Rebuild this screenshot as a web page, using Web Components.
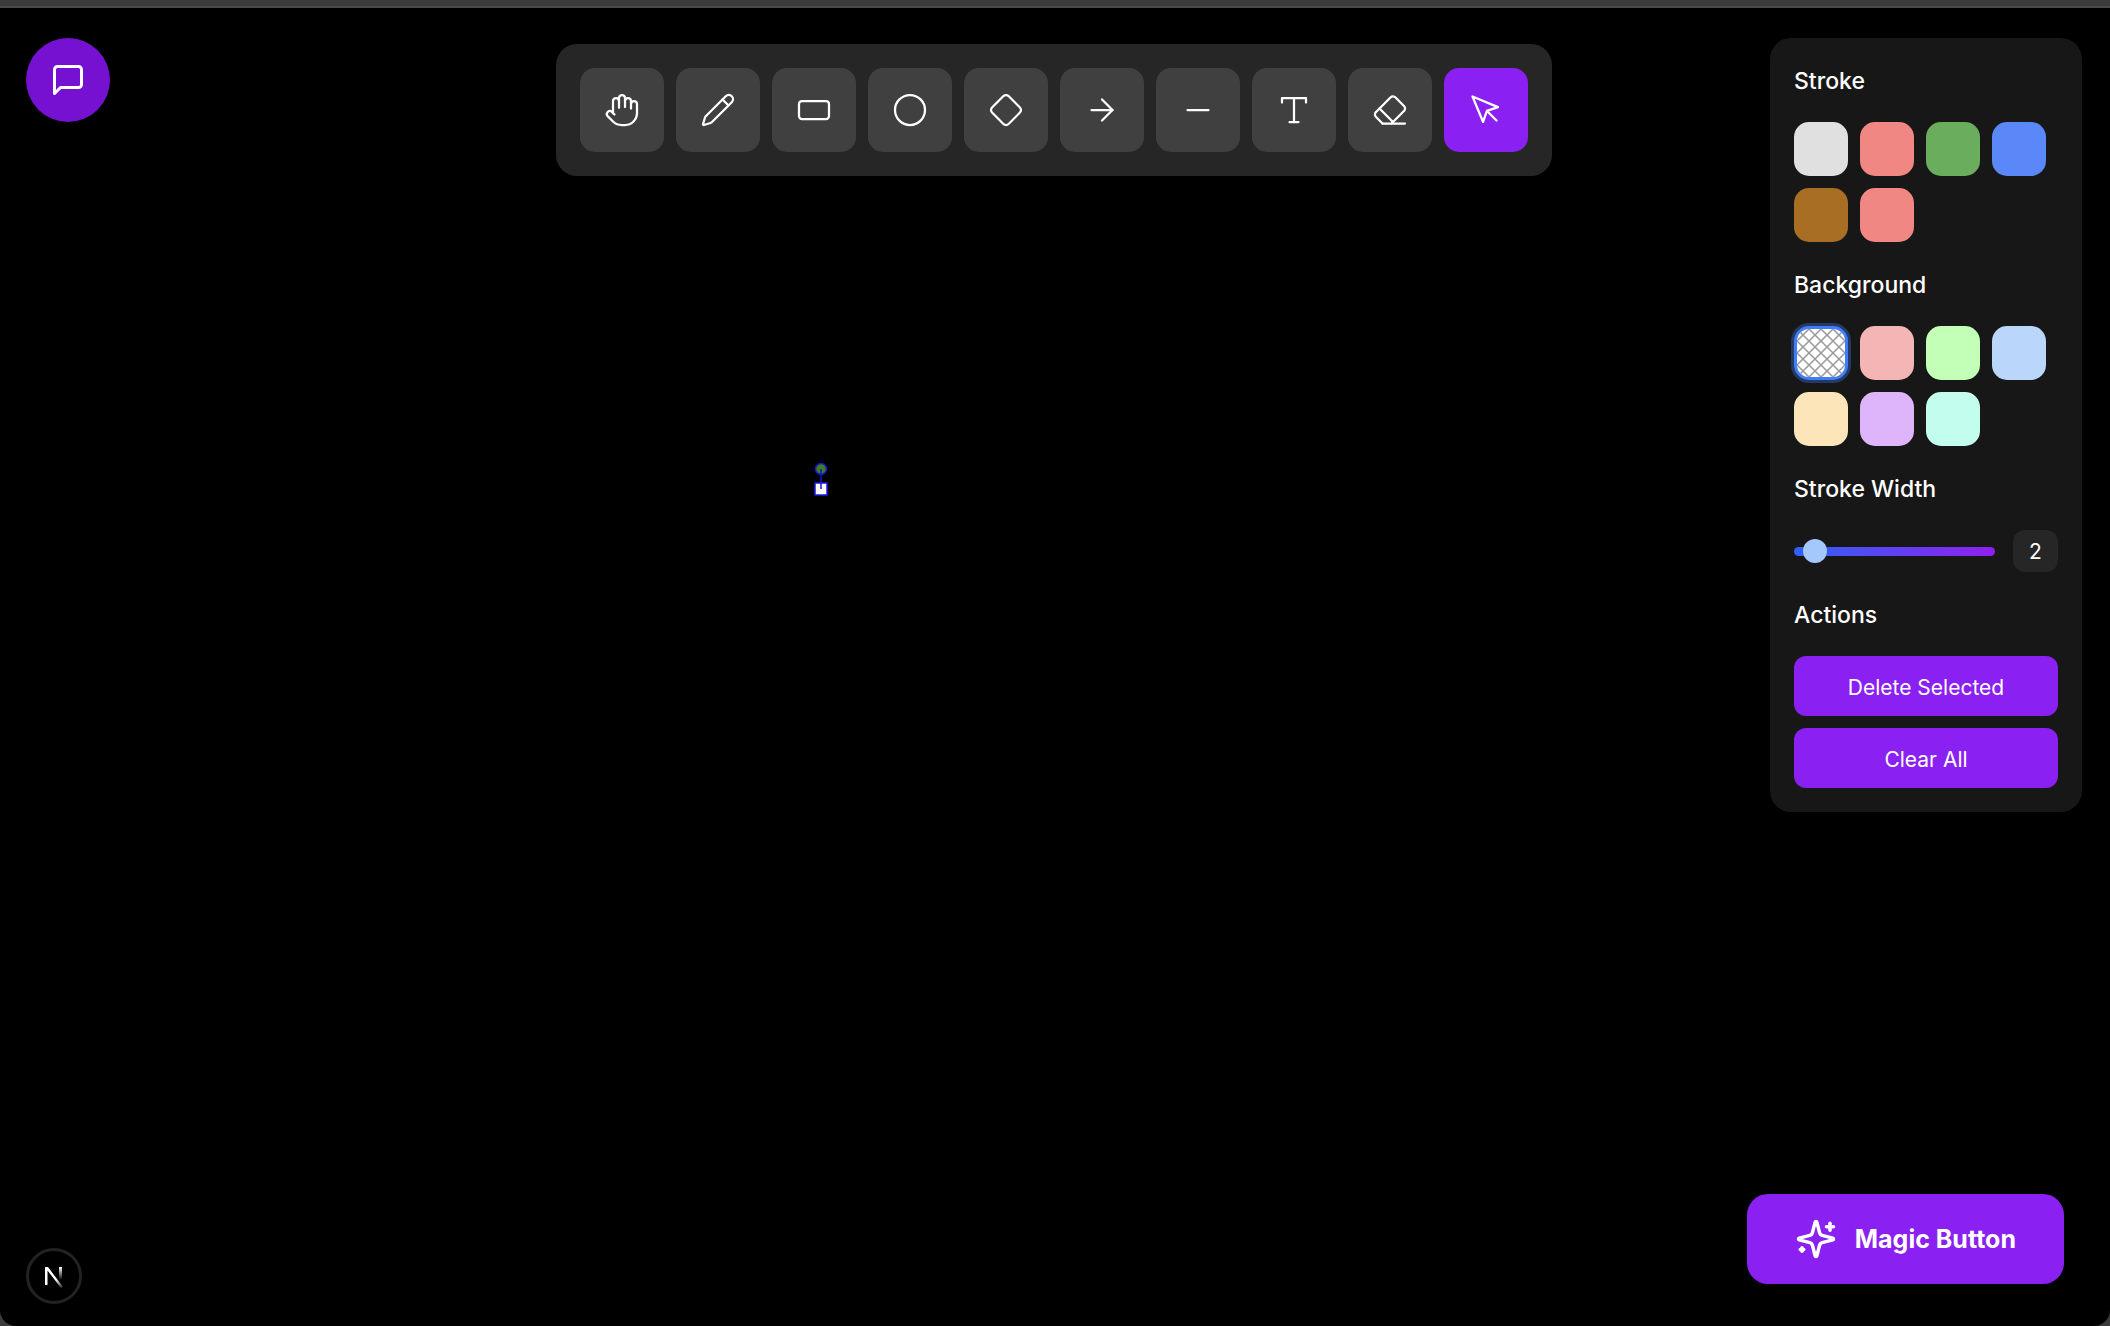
<!DOCTYPE html>
<html lang="en">
<head>
<meta charset="utf-8">
<title>Whiteboard</title>
<style>
html, body { height: 100%; }
body { margin: 0; background: #3c3c3c; color: #fff; font-family: Inter, "Noto Sans", sans-serif; font-size: 21px; }
</style>
</head>
<body>
<board-app></board-app>
<script>
const ICONS = {
  hand: '<path d="M18 11V6a2 2 0 0 0-2-2a2 2 0 0 0-2 2"/><path d="M14 10V4a2 2 0 0 0-2-2a2 2 0 0 0-2 2v2"/><path d="M10 10.5V6a2 2 0 0 0-2-2a2 2 0 0 0-2 2v8"/><path d="M18 8a2 2 0 1 1 4 0v6a8 8 0 0 1-8 8h-2c-2.8 0-4.5-.86-5.99-2.34l-3.6-3.6a2 2 0 0 1 2.83-2.82L7 15"/>',
  pencil: '<path d="M21.174 6.812a1 1 0 0 0-3.986-3.987L3.842 16.174a2 2 0 0 0-.5.83l-1.321 4.352a.5.5 0 0 0 .623.622l4.353-1.32a2 2 0 0 0 .83-.497z"/><path d="m15 5 4 4"/>',
  rectangle: '<rect width="20" height="12" x="2" y="6" rx="2"/>',
  circle: '<circle cx="12" cy="12" r="10"/>',
  diamond: '<path d="M2.7 10.3a2.41 2.41 0 0 0 0 3.41l7.59 7.59a2.41 2.41 0 0 0 3.41 0l7.59-7.59a2.41 2.41 0 0 0 0-3.41l-7.59-7.59a2.41 2.41 0 0 0-3.41 0Z"/>',
  arrow: '<path d="M5 12h14"/><path d="m12 5 7 7-7 7"/>',
  line: '<path d="M5 12h14"/>',
  text: '<path d="M4 7V4h16v3"/><path d="M9 20h6"/><path d="M12 4v16"/>',
  eraser: '<path d="m7 21-4.3-4.3c-1-1-1-2.5 0-3.4l9.6-9.6c1-1 2.5-1 3.4 0l5.6 5.6c1 1 1 2.5 0 3.4L13 21"/><path d="M22 21H7"/><path d="m5 11 9 9"/>',
  pointer: '<path d="m3 3 7.07 16.97 2.51-7.39 7.39-2.51L3 3z"/><path d="m13 13 6 6"/>',
  chat: '<path d="M21 15a2 2 0 0 1-2 2H7l-4 4V5a2 2 0 0 1 2-2h14a2 2 0 0 1 2 2z"/>',
  sparkles: '<path d="M9.937 15.5A2 2 0 0 0 8.5 14.063l-6.135-1.582a.5.5 0 0 1 0-.962L8.5 9.936A2 2 0 0 0 9.937 8.5l1.582-6.135a.5.5 0 0 1 .963 0L14.063 8.5A2 2 0 0 0 15.5 9.937l6.135 1.581a.5.5 0 0 1 0 .964L15.5 14.063a2 2 0 0 0-1.437 1.437l-1.582 6.135a.5.5 0 0 1-.963 0z"/><path d="M20 3v4"/><path d="M22 5h-4"/><path d="M4 17v2"/><path d="M5 18H3"/>'
};

const define = (name, render) => customElements.define(name, class extends HTMLElement {
  constructor() {
    super();
    this.attachShadow({ mode: 'open' });
  }
  connectedCallback() {
    this.shadowRoot.innerHTML = '<style>:host,*{box-sizing:border-box}button{font:inherit;color:inherit;border:0;padding:0;cursor:pointer}</style>' + render(this);
  }
});

define('line-icon', el => `
<style>
:host { display: block; width: var(--icon-size, 36px); height: var(--icon-size, 36px); }
svg { display: block; width: 100%; height: 100%; }
</style>
<svg viewBox="0 0 24 24" fill="none" stroke="currentColor" stroke-width="${el.getAttribute('weight') || 1.5}" stroke-linecap="round" stroke-linejoin="round" aria-hidden="true">${ICONS[el.getAttribute('name')]}</svg>`);

define('tool-button', el => `
<style>
:host { display: block; }
button { display: grid; place-items: center; width: 84px; height: 84px; border-radius: 15px; background: #404040; }
button[aria-pressed="true"] { background: #8b20f2; }
</style>
<button type="button" aria-label="${el.getAttribute('name')}" aria-pressed="${el.hasAttribute('active')}"><line-icon name="${el.getAttribute('name')}"></line-icon></button>`);

define('tool-bar', () => `
<style>
:host { display: flex; gap: 12px; padding: 24px; border-radius: 21px; background: #262626; }
</style>
${['hand', 'pencil', 'rectangle', 'circle', 'diamond', 'arrow', 'line', 'text', 'eraser'].map(n => `<tool-button name="${n}"></tool-button>`).join('')}
<tool-button name="pointer" active></tool-button>`);

define('chat-button', () => `
<style>
:host { display: block; }
button { display: grid; place-items: center; width: 84px; height: 84px; border-radius: 50%; background: #7611d1; }
</style>
<button type="button" aria-label="Chat"><line-icon name="chat" weight="2"></line-icon></button>`);

define('panel-section', el => `
<style>
:host { display: flex; flex-direction: column; gap: 22px; }
h2 { margin: 0; font-size: 23px; font-weight: 500; line-height: 38px; }
</style>
<h2>${el.getAttribute('heading')}</h2>
<slot></slot>`);

define('colour-swatches', el => `
<style>
:host { display: flex; flex-wrap: wrap; gap: 12px; }
button { width: 54px; height: 54px; border-radius: 15px; overflow: hidden; }
button.none { border: 3px solid #3f7dfb; background: #fff; box-shadow: 0 0 0 3px #243a66; }
svg { display: block; width: 48px; height: 48px; }
</style>
${el.hasAttribute('transparent') ? '<button type="button" class="none" aria-label="Transparent"><svg viewBox="0 0 48 48" fill="none" stroke="#999" stroke-width="1.5" aria-hidden="true"><path d="M0 0 48 48M12 0 48 36M24 0 48 24M36 0 48 12M0 12 36 48M0 24 24 48M0 36 12 48M48 0 0 48M36 0 0 36M24 0 0 24M12 0 0 12M48 12 12 48M48 24 24 48M48 36 36 48"/></svg></button>' : ''}
${el.getAttribute('colours').split(' ').map(c => `<button type="button" aria-label="${c}" style="background:${c}"></button>`).join('')}`);

define('width-slider', () => `
<style>
:host { display: flex; align-items: center; gap: 18px; }
input { -webkit-appearance: none; appearance: none; flex: 1; min-width: 0; height: 9px; margin: 0; border-radius: 5px; background: linear-gradient(90deg, #2f62f6, #8f20ef); }
input::-webkit-slider-thumb { -webkit-appearance: none; width: 24px; height: 24px; border-radius: 50%; background: #a3c8fc; }
output { display: grid; place-items: center; width: 45px; height: 42px; border-radius: 12px; background: #262626; }
</style>
<input id="w" type="range" min="1" max="20" value="2" aria-label="Stroke width"><output for="w">2</output>`);

define('action-button', () => `
<style>
:host { display: block; }
button { width: 100%; height: 60px; padding-top: 2px; border-radius: 12px; background: #8b20f2; }
</style>
<button type="button"><slot></slot></button>`);

define('style-panel', () => `
<style>
:host { display: flex; flex-direction: column; gap: 24px; width: 312px; padding: 24px; border-radius: 21px; background: #171717; }
.actions { display: flex; flex-direction: column; gap: 12px; }
</style>
<panel-section heading="Stroke"><colour-swatches colours="#e0e0e0 #f08783 #69ad5d #5b88f8 #a86e24 #f08783"></colour-swatches></panel-section>
<panel-section heading="Background"><colour-swatches transparent colours="#f4b5b5 #c3ffb6 #bad6fb #fce6b9 #deb5fa #c3fdee"></colour-swatches></panel-section>
<panel-section heading="Stroke Width"><width-slider></width-slider></panel-section>
<panel-section heading="Actions"><div class="actions"><action-button>Delete Selected</action-button><action-button>Clear All</action-button></div></panel-section>`);

define('magic-button', () => `
<style>
:host { display: block; --icon-size: 42px; }
button { display: flex; align-items: center; gap: 18px; height: 90px; padding: 0 48px; border-radius: 21px; background: #8b20f2; font-size: 25px; font-weight: 700; }
</style>
<button type="button"><line-icon name="sparkles" weight="2"></line-icon><slot></slot></button>`);

define('dev-badge', () => `
<style>
:host { display: block; }
button { display: grid; place-items: center; width: 56px; height: 56px; border: 3px solid #222; border-radius: 50%; background: #000; }
svg { display: block; width: 22px; height: 24px; }
</style>
<button type="button" aria-label="Developer tools"><svg viewBox="0 0 22 24" fill="none" aria-hidden="true">
<defs><linearGradient id="a" x1="10" y1="12" x2="20" y2="24" gradientUnits="userSpaceOnUse"><stop offset=".3" stop-color="#fff"/><stop offset="1" stop-color="#fff" stop-opacity=".1"/></linearGradient>
<linearGradient id="b" x1="0" y1="3" x2="0" y2="16" gradientUnits="userSpaceOnUse"><stop stop-color="#fff"/><stop offset="1" stop-color="#fff" stop-opacity="0"/></linearGradient></defs>
<path d="M2 21V3h3l15 20-2 1L4.500 6.500V21Z" fill="url(#a)"/><path d="M16 3h3v13h-3Z" fill="url(#b)"/></svg></button>`);

define('selection-handle', () => `
<style>
:host { position: absolute; left: 813px; top: 453px; }
svg { display: block; width: 16px; height: 36px; }
</style>
<svg viewBox="0 0 16 36" aria-hidden="true"><circle cx="8" cy="8" r="5.500" fill="#3f7f1f" stroke="#1414d8" stroke-width="1.500"/><rect x="2" y="22" width="12" height="12" fill="#fff" stroke="#1818ee" stroke-width="1.500"/><path d="M8 8v20" stroke="#1414d8" stroke-width="1.500"/></svg>`);

define('board-app', () => `
<style>
:host { display: block; height: 100vh; min-height: 960px; padding-top: 8px; background: linear-gradient(#3c3c3c 6px, #4a4a4a 6px 8px, #3c3c3c 8px); }
main { position: relative; display: flex; flex-direction: column; justify-content: space-between; height: 100%; padding: 30px 28px 22px 26px; border-radius: 0 0 16px 16px; background: #000; }
.top { display: grid; grid-template-columns: 1fr auto 1fr; align-items: start; }
tool-bar { margin-top: 6px; }
style-panel { justify-self: end; }
.bottom { display: flex; justify-content: space-between; align-items: end; }
magic-button { margin: 0 18px 20px 0; }
</style>
<main>
<div class="top"><chat-button></chat-button><tool-bar></tool-bar><style-panel></style-panel></div>
<selection-handle></selection-handle>
<div class="bottom"><dev-badge></dev-badge><magic-button>Magic Button</magic-button></div>
</main>`);
</script>
</body>
</html>
